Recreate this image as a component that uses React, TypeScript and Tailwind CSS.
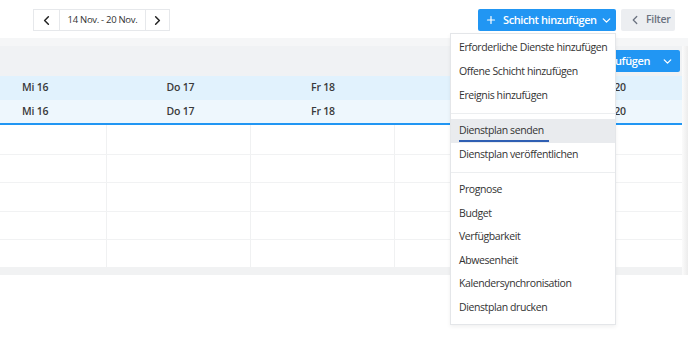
import { ChevronLeft, ChevronRight, ChevronDown, Plus } from 'lucide-react';

// Sa 19 sits under the open menu, so it is left blank
const days = ['Mi 16', 'Do 17', 'Fr 18', '', 'So 20'];

const menuGroups = [
  ['Erforderliche Dienste hinzufügen', 'Offene Schicht hinzufügen', 'Ereignis hinzufügen'],
  ['Dienstplan senden', 'Dienstplan veröffentlichen'],
  ['Prognose', 'Budget', 'Verfügbarkeit', 'Abwesenheit', 'Kalendersynchronisation', 'Dienstplan drucken'],
];

export default function App() {
  return (
    <div
      className="relative w-[688px] h-[350px] overflow-hidden bg-white text-[#333] whitespace-nowrap"
      style={{ fontFamily: '"Open Sans", "Noto Sans", sans-serif' }}
    >
      {/* top bar */}
      <div className="h-[38px] flex items-start pt-[9px] pl-[33px] pr-[13px]">
        <div className="flex h-[22px] border border-[#e6e8eb] bg-white">
          <button className="w-[26px] flex items-center justify-center border-r border-[#e6e8eb]">
            <ChevronLeft size={15} strokeWidth={2.4} className="text-[#222]" />
          </button>
          <div className="w-[86px] flex items-center justify-center text-[9.5px] tracking-[-0.3px] text-[#333] border-r border-[#e6e8eb]">
            14 Nov. - 20 Nov.
          </div>
          <button className="w-[23px] flex items-center justify-center">
            <ChevronRight size={15} strokeWidth={2.4} className="text-[#222]" />
          </button>
        </div>
        <div className="ml-auto flex gap-[5px]">
          <div className="flex h-[22px] w-[138px] bg-[#2196f3] text-white rounded-[2px]">
            <div className="flex items-center pl-[7px] gap-[6px] flex-1">
              <Plus size={12} strokeWidth={2.4} />
              <span className="text-[11px] font-semibold tracking-[-0.4px]">Schicht hinzufügen</span>
            </div>
            <div className="w-[26px] flex items-center justify-center">
              <ChevronDown size={13} strokeWidth={2.4} />
            </div>
          </div>
          <div className="flex h-[22px] w-[54px] items-center gap-[4px] pl-[7px] bg-[#eceef1] text-[#6b7280] rounded-[2px]">
            <ChevronLeft size={14} strokeWidth={2.2} />
            <span className="text-[10.5px] font-semibold tracking-[-0.3px]">Filter</span>
          </div>
        </div>
      </div>

      {/* gray strip */}
      <div className="h-[8px] bg-[#f5f6f7]" />

      <div className="flex">
        <div className="w-[682px] overflow-hidden">
          {/* header row */}
          <div className="h-[30px] bg-[#f0f2f4] flex items-center justify-end pr-[2px]">
            <div className="flex h-[22px] bg-[#2196f3] text-white rounded-[2px]">
              <div className="flex items-center pl-[16px]">
                <span className="text-[11px] font-semibold tracking-[-0.4px]">hinzufügen</span>
              </div>
              <div className="w-[30px] flex items-center justify-end pr-[6px]">
                <ChevronDown size={13} strokeWidth={2.4} />
              </div>
            </div>
          </div>
          <div className="h-[24px] bg-[#e1f2fd] flex items-center text-[10.5px] font-semibold tracking-[-0.2px] text-[#3a3a3a]">
            {days.map((d, i) => (
              <div key={i} className="w-[144.5px] shrink-0 pl-[22px]">{d}</div>
            ))}
          </div>
          <div className="h-[25px] bg-[#eef7fd] flex items-center text-[10.5px] font-semibold tracking-[-0.2px] text-[#3a3a3a] border-b-2 border-[#2196f3]">
            {days.map((d, i) => (
              <div key={i} className="w-[144.5px] shrink-0 pl-[22px]">{d}</div>
            ))}
          </div>
          {[30, 28, 29, 28, 28].map((h, i) => (
            <div key={i} className="flex border-b border-[#f1f2f3]" style={{ height: h }}>
              <div className="w-[107px] shrink-0 border-r border-[#f0f1f2]" />
              <div className="w-[144px] shrink-0 border-r border-[#f0f1f2]" />
              <div className="w-[144px] shrink-0 border-r border-[#f0f1f2]" />
              <div className="w-[145px] shrink-0 border-r border-[#f0f1f2]" />
              <div className="flex-1" />
            </div>
          ))}
          <div className="h-[7px] bg-[#f1f2f3]" />
        </div>
        <div className="w-[6px] bg-gradient-to-r from-[#fbfbfb] to-[#ececec]" />
      </div>

      {/* dropdown menu */}
      <div className="absolute left-[450px] top-[33px] w-[166px] h-[292px] bg-white border border-[#e4e6e9] shadow-[0_2px_4px_rgba(0,0,0,0.06)] pt-[2px]">
        {menuGroups.map((group, gi) => (
          <div key={gi}>
            {gi > 0 && <div className="my-[5px] h-px bg-[#eceef0]" />}
            {group.map(item => (
              <div
                key={item}
                className={`${gi === 2 ? 'h-[23.6px]' : 'h-[24px]'} flex items-center pl-[8px] text-[10.5px] tracking-[-0.4px] text-[#333] ${item === 'Dienstplan senden' ? 'bg-[#e9ebee]' : ''}`}
              >
                {item === 'Dienstplan senden' ? (
                  <span className="relative">
                    {item}
                    <span className="absolute left-0 right-[-5px] bottom-[-3px] h-[2px] bg-[#2f5fb3]" />
                  </span>
                ) : (
                  item
                )}
              </div>
            ))}
          </div>
        ))}
      </div>
    </div>
  );
}
